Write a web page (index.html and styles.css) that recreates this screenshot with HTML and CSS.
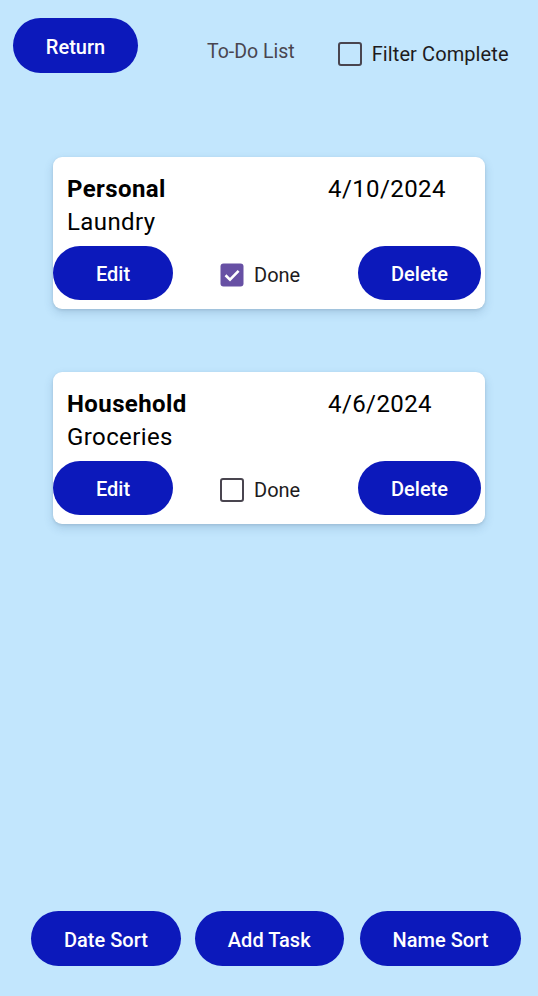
FILE: index.html
```html
<!DOCTYPE html>
<html>
<head>
<meta charset="utf-8">
<link rel="stylesheet" href="styles.css">
</head>
<body>
<div class="page">
  <header class="top">
    <button class="btn btn-return">Return</button>
    <span class="title">To-Do List</span>
    <label class="filter">
      <span class="box"></span>
      <span class="filter-text">Filter Complete</span>
    </label>
  </header>

  <main class="cards">
    <section class="card">
      <div class="row-top">
        <span class="cat">Personal</span>
        <span class="date">4/10/2024</span>
      </div>
      <div class="task">Laundry</div>
      <div class="actions">
        <button class="btn btn-card">Edit</button>
        <span class="done">
          <svg class="check" viewBox="0 0 24 24" width="24" height="24">
            <rect x="0.5" y="0.5" width="23" height="23" rx="3" fill="#6750a4"/>
            <path d="M5.5 12.2 L10 16.6 L18.6 7.8" fill="none" stroke="#fff" stroke-width="2.6"/>
          </svg>
          <span class="done-text">Done</span>
        </span>
        <button class="btn btn-card btn-delete">Delete</button>
      </div>
    </section>

    <section class="card">
      <div class="row-top">
        <span class="cat">Household</span>
        <span class="date">4/6/2024</span>
      </div>
      <div class="task">Groceries</div>
      <div class="actions">
        <button class="btn btn-card">Edit</button>
        <span class="done">
          <span class="box"></span>
          <span class="done-text">Done</span>
        </span>
        <button class="btn btn-card btn-delete">Delete</button>
      </div>
    </section>
  </main>

  <footer class="bottom">
    <button class="btn btn-bottom">Date Sort</button>
    <button class="btn btn-bottom">Add Task</button>
    <button class="btn btn-bottom">Name Sort</button>
  </footer>
</div>
</body>
</html>
```

FILE: styles.css
```css
* { box-sizing: border-box; }
html, body {
  margin: 0;
  padding: 0;
  background: #c2e6fd;
}
body {
  font-family: Roboto, "Noto Sans", sans-serif;
  color: #000;
}
.page {
  min-height: 996px;
  display: flex;
  flex-direction: column;
}
.btn {
  font-family: Roboto, sans-serif;
  font-weight: 500;
  font-size: 20px;
  color: #fff;
  background: #0c19bb;
  border: none;
  border-radius: 28px;
  height: 55px;
  padding: 2px 0 0 0;
  display: flex;
  align-items: center;
  justify-content: center;
  cursor: pointer;
}
.top {
  display: flex;
  align-items: flex-start;
  padding: 18px 0 0 13px;
}
.btn-return {
  width: 125px;
}
.title {
  margin-left: 69px;
  margin-top: 22px;
  font-size: 19.5px;
  line-height: 24px;
  color: #49454f;
}
.filter {
  display: flex;
  align-items: center;
  margin-left: 43px;
  margin-top: 24px;
  height: 24px;
}
.box {
  width: 24px;
  height: 24px;
  border: 2.6px solid #49454f;
  border-radius: 3px;
  flex: none;
}
.filter-text {
  margin-left: 10px;
  font-size: 20px;
  letter-spacing: 0.1px;
  color: #1d1b20;
}
.cards {
  margin: 84px 0 0 53px;
  width: 432px;
  display: flex;
  flex-direction: column;
  gap: 63px;
}
.card {
  background: #fff;
  border-radius: 9px;
  box-shadow: 0 4px 10px rgba(40, 80, 120, 0.18), 0 1px 3px rgba(0, 0, 0, 0.1);
  padding: 18px 0 9px 0;
}
.row-top {
  display: grid;
  grid-template-columns: 261px 1fr;
  padding-left: 14px;
  font-size: 24px;
  line-height: 28px;
  letter-spacing: 0.4px;
}
.cat {
  font-weight: 700;
}
.task {
  padding-left: 14px;
  margin-top: 5px;
  font-size: 24px;
  line-height: 28px;
  letter-spacing: 0.4px;
}
.actions {
  margin-top: 10px;
  display: flex;
  align-items: center;
}
.btn-card {
  width: 120px;
  height: 54px;
}
.btn-delete {
  width: 123px;
  margin-left: auto;
  margin-right: 4px;
}
.done {
  margin-left: 47px;
  margin-top: 3px;
  display: flex;
  align-items: center;
  height: 24px;
}
.check {
  display: block;
  flex: none;
}
.done-text {
  margin-left: 10px;
  font-size: 20px;
  color: #1d1b20;
}
.bottom {
  margin-top: auto;
  margin-bottom: 30px;
  display: flex;
  padding-left: 31px;
  gap: 14px;
}
.btn-bottom {
  padding: 2px 33px 0;
}
.btn-bottom:last-child {
  margin-left: 2px;
}
```
